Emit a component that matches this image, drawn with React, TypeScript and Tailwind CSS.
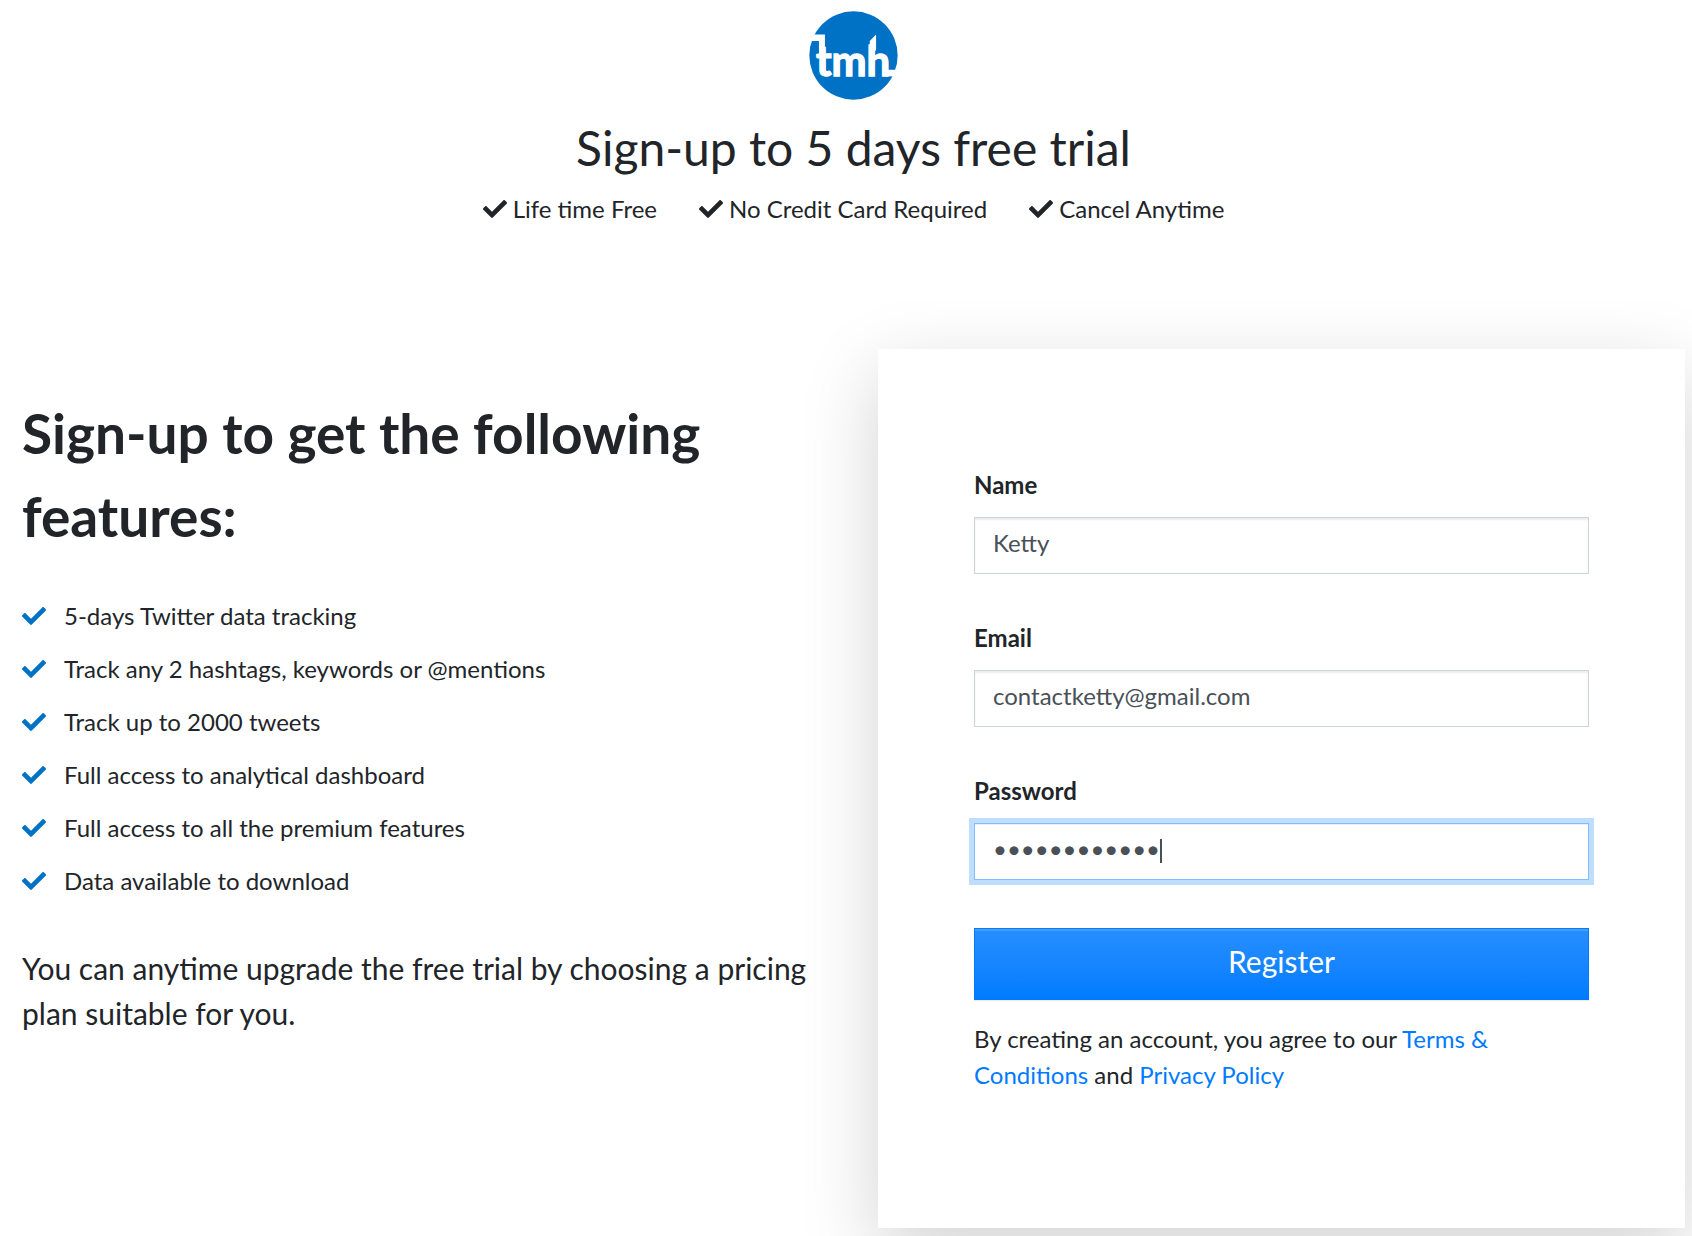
import { FaCheck } from 'react-icons/fa';

const PERKS = ['Life time Free', 'No Credit Card Required', 'Cancel Anytime'];

const FEATURES = [
  '5-days Twitter data tracking',
  'Track any 2 hashtags, keywords or @mentions',
  'Track up to 2000 tweets',
  'Full access to analytical dashboard',
  'Full access to all the premium features',
  'Data available to download',
];

function Logo() {
  return (
    <svg viewBox="28 31 268 268" className="h-[89px] w-[89px]" role="img" aria-label="tmh">
      <circle cx="162" cy="165" r="133" fill="#0072c6" />
      {/* crossbar running in from the rim, the raised stem, and the tail running out */}
      <path d="M30 102H76V160H58V121H30Z" fill="#fff" />
      <path d="M211 121L230 102V150H211Z" fill="#fff" />
      <path d="M254 208H296V228H254Z" fill="#fff" />
      <text
        x="49"
        y="227"
        fill="#fff"
        stroke="#fff"
        strokeWidth="4"
        fontSize="126"
        fontWeight="700"
        fontFamily="Lato, sans-serif"
      >
        tmh
      </text>
    </svg>
  );
}

interface FieldProps {
  id: string;
  label: string;
  type: string;
  value: string;
  active?: boolean;
}

function Field({ id, label, type, value, active }: FieldProps) {
  return (
    <div className="mb-12">
      <label htmlFor={id} className="mb-4 block leading-8 font-bold">
        {label}
      </label>
      <div className="relative">
        <input
          id={id}
          type={type}
          defaultValue={value}
          autoFocus={active}
          className="block h-[57px] w-full border border-[#ced4da] bg-white px-[18px] pb-[6px] text-[#495057] caret-transparent shadow-[inset_0_2px_2px_rgba(0,0,0,0.075)] outline-none focus:border-[#80bdff] focus:shadow-[inset_0_1px_1px_rgba(0,0,0,0.075),0_0_0_5px_rgba(0,123,255,0.25)]"
        />
        {active && <span className="absolute top-4 left-[186px] h-6 w-[2px] bg-[#495057]" />}
      </div>
    </div>
  );
}

export default function App() {
  return (
    <div className="min-h-screen overflow-hidden bg-white pt-[11px] pr-[7px] pb-2 pl-[22px] font-[Lato,sans-serif] text-2xl leading-9 text-[#212529]">
      <header className="flex flex-col items-center">
        <Logo />
        <h1 className="mt-5 text-5xl leading-[56px]">Sign-up to 5 days free trial</h1>
        <ul className="mt-[15px] flex gap-[42px]">
          {PERKS.map((perk) => (
            <li key={perk} className="flex items-center gap-[6px]">
              <FaCheck size={24} />
              {perk}
            </li>
          ))}
        </ul>
      </header>

      <main className="mt-[122px] grid grid-cols-2 gap-[49px]">
        <section className="pt-[43px]">
          <h2 className="text-[55px] leading-[83px] font-bold">Sign-up to get the following features:</h2>
          <ul className="mt-10 flex flex-col gap-[17px]">
            {FEATURES.map((feature) => (
              <li key={feature} className="flex items-center gap-[18px]">
                <FaCheck size={24} color="#0072c6" />
                {feature}
              </li>
            ))}
          </ul>
          <p className="mt-[47px] text-[30px] leading-[45px]">
            You can anytime upgrade the free trial by choosing a pricing plan suitable for you.
          </p>
        </section>

        <section className="bg-white px-24 pt-[120px] pb-[135px] shadow-[0_24px_72px_rgba(0,0,0,0.175)]">
          <form onSubmit={(e) => e.preventDefault()}>
            <Field id="name" label="Name" type="text" value="Ketty" />
            <Field id="email" label="Email" type="email" value="contactketty@gmail.com" />
            <Field id="password" label="Password" type="password" value="tmhtrial2020" active />
            <button
              type="submit"
              className="block h-[72px] w-full border border-[#007bff] bg-linear-to-b from-[#268fff] to-[#007bff] pb-[6px] text-[30px] text-white shadow-[inset_0_2px_0_rgba(255,255,255,0.15),0_1px_1px_rgba(0,0,0,0.075)]"
            >
              Register
            </button>
          </form>
          <p className="mt-[21px]">
            By creating an account, you agree to our{' '}
            <a href="#terms" className="text-[#007bff]">
              Terms &amp; Conditions
            </a>{' '}
            and{' '}
            <a href="#privacy" className="text-[#007bff]">
              Privacy Policy
            </a>
          </p>
        </section>
      </main>
    </div>
  );
}
